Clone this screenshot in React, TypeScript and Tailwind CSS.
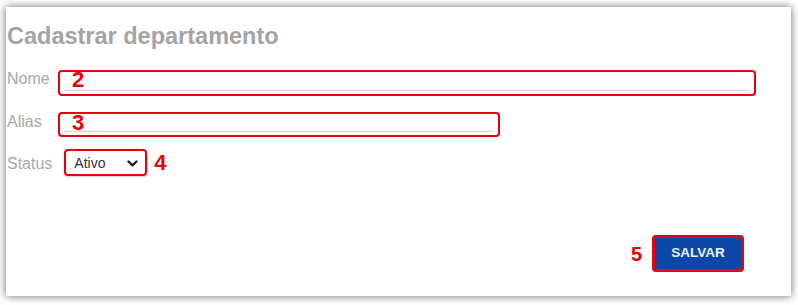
import React from "react";

export default function App() {
  return (
    <div
      className="w-[798px] h-[305px] bg-white overflow-hidden pt-[7px] pl-[6px]"
      style={{ fontFamily: '"Liberation Sans", Arial, sans-serif' }}
    >
      <div className="w-[785px] h-[289px] bg-white shadow-[0_0_8px_rgba(0,0,0,0.6)] pl-[1px] pt-[16px] flex flex-col">
        <h1 className="text-[23.5px] leading-[27px] font-bold text-[#a4a4a4]">
          Cadastrar departamento
        </h1>

        {/* Nome */}
        <div className="flex items-start mt-[20px]">
          <label className="w-[51px] text-[16px] leading-[18px] text-[#a8a8a8]">
            Nome
          </label>
          <div className="relative w-[698px] h-[26px] border-2 border-[#e8000d] rounded-[4px] pl-[4px] pr-[6px]">
            <div className="h-[19px] border-b-[1.5px] border-[#d2d2d2]" />
            <span className="absolute left-[12px] top-[-3px] text-[22px] leading-[22px] font-bold text-[#ee0000]">
              2
            </span>
          </div>
        </div>

        {/* Alias */}
        <div className="flex items-start mt-[16px]">
          <label className="w-[51px] text-[16px] leading-[18px] text-[#a8a8a8] mt-[1px]">
            Alias
          </label>
          <div className="relative w-[442px] h-[25px] border-2 border-[#e8000d] rounded-[4px] pl-[4px] pr-[5px]">
            <div className="h-[18px] border-b-[1.5px] border-[#d2d2d2]" />
            <span className="absolute left-[12px] top-[-2px] text-[22px] leading-[22px] font-bold text-[#ee0000]">
              3
            </span>
          </div>
        </div>

        {/* Status */}
        <div className="flex items-center mt-[12px]">
          <label className="text-[16px] leading-[18px] text-[#a8a8a8] mt-[2px]">
            Status
          </label>
          <div className="ml-[12px] w-[83px] h-[27px] border-2 border-[#e8000d] rounded-[4px] flex items-center pl-[8px] pr-[7px] shadow-[0_1px_2px_rgba(0,0,0,0.2)]">
            <span className="flex-1 text-[14px] leading-[16px] text-[#333333]">Ativo</span>
            <svg width="11" height="7" viewBox="0 0 11 7" className="mb-[-1px]">
              <polyline
                points="1.5,1.5 5.5,5.3 9.5,1.5"
                fill="none"
                stroke="#222222"
                strokeWidth="2.4"
                strokeLinecap="round"
                strokeLinejoin="round"
              />
            </svg>
          </div>
          <span className="ml-[7px] text-[22px] leading-[22px] font-bold text-[#ee0000]">4</span>
        </div>

        {/* Button */}
        <div className="flex justify-end items-center mt-[59px] pr-[47px]">
          <span className="mr-[10px] text-[20px] leading-[20px] font-bold text-[#ee0000]">5</span>
          <button className="w-[92px] h-[37px] border-[3px] border-[#e8000d] rounded-[4px] bg-[#0d47a8] text-[#eef2fa] text-[13.5px] font-bold">
            SALVAR
          </button>
        </div>
      </div>
    </div>
  );
}
